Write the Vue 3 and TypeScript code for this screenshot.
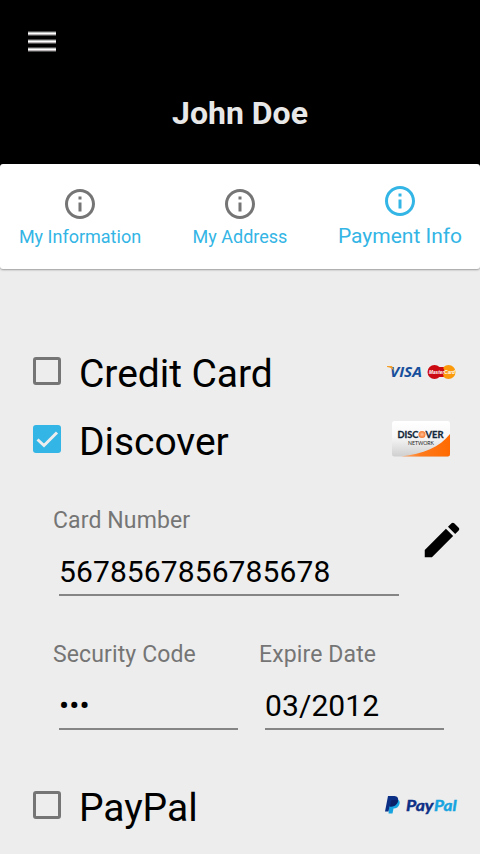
<script setup lang="ts">
import { ref } from 'vue'

interface Tab {
  id: string
  label: string
}

const tabs: Tab[] = [
  { id: 'info', label: 'My Information' },
  { id: 'address', label: 'My Address' },
  { id: 'payment', label: 'Payment Info' },
]

const activeTab = ref('payment')
const method = ref('discover')
const cardNumber = ref('5678567856785678')
const securityCode = ref('•••')
const expireDate = ref('03/2012')
</script>

<template>
  <div class="screen">
    <header class="header">
      <button class="menu" aria-label="Menu">
        <span class="bar"></span>
        <span class="bar"></span>
        <span class="bar"></span>
      </button>
      <h1 class="name">John Doe</h1>
    </header>

    <nav class="tabs">
      <button
        v-for="tab in tabs"
        :key="tab.id"
        class="tab"
        :class="{ active: tab.id === activeTab }"
        @click="activeTab = tab.id"
      >
        <svg class="tab-icon" viewBox="0 0 24 24">
          <path
            d="M11 17h2v-6h-2v6zm1-15C6.48 2 2 6.48 2 12s4.48 10 10 10 10-4.480 10-10S17.520 2 12 2zm0 18c-4.410 0-8-3.590-8-8s3.590-8 8-8 8 3.590 8 8-3.590 8-8 8zM11 9h2V7h-2v2z"
          />
        </svg>
        <span class="tab-label">{{ tab.label }}</span>
      </button>
    </nav>

    <main class="content">
      <div class="method" @click="method = 'credit'">
        <span class="box" :class="{ checked: method === 'credit' }">
          <svg v-if="method === 'credit'" class="tick" viewBox="0 0 28 28"><path d="M4.500 14.500L11 20.500L24 7.500" /></svg>
        </span>
        <span class="method-label">Credit Card</span>
        <svg class="logo" width="72" height="26" viewBox="0 -4 72 26">
          <text class="visa" x="4" y="15" textLength="32" lengthAdjust="spacingAndGlyphs">VISA</text>
          <path d="M1 4H6L8.500 9.500C7 7 4.500 5.500 1 5Z" fill="#f5a02c" />
          <circle cx="48.500" cy="10" r="7" fill="#cc0a12" />
          <circle cx="62.500" cy="10" r="7" fill="#fb9a0b" />
          <path d="M52 5H58V15H52Z" fill="#cc0a12" />
          <path d="M57 6H62M57 14H62M57 12.500H60" stroke="#fb9a0b" stroke-width="1" />
          <text class="master" x="43" y="12" textLength="26" lengthAdjust="spacingAndGlyphs">MasterCard</text>
        </svg>
      </div>

      <div class="method" @click="method = 'discover'">
        <span class="box" :class="{ checked: method === 'discover' }">
          <svg v-if="method === 'discover'" class="tick" viewBox="0 0 28 28"><path d="M4.500 14.500L11 20.500L24 7.500" /></svg>
        </span>
        <span class="method-label">Discover</span>
        <svg class="logo discover-logo" width="60" height="38" viewBox="0 0 60 38">
          <defs>
            <linearGradient id="cardFill" x1="0" y1="0" x2="0" y2="1">
              <stop offset="0" stop-color="#ffffff" />
              <stop offset=".45" stop-color="#f7f7f7" />
              <stop offset="1" stop-color="#cfcfcf" />
            </linearGradient>
            <linearGradient id="swoosh" x1="0" y1="0" x2="1" y2="0">
              <stop offset="0" stop-color="#ffb27a" />
              <stop offset=".4" stop-color="#ff7a1c" />
              <stop offset="1" stop-color="#ff6a00" />
            </linearGradient>
            <radialGradient id="orb">
              <stop offset="0" stop-color="#ffc29a" />
              <stop offset="1" stop-color="#f5782d" />
            </radialGradient>
          </defs>
          <rect x="1" y="1" width="58" height="35.500" rx="2.500" fill="url(#cardFill)" />
          <path d="M59 14V34Q59 36.500 56.500 36.500H10C32 34 49 27 59 14Z" fill="url(#swoosh)" />
          <text class="disc" x="6.500" y="17.700" textLength="21" lengthAdjust="spacingAndGlyphs">DISC</text>
          <text class="disc" x="34.500" y="17.700" textLength="18" lengthAdjust="spacingAndGlyphs">VER</text>
          <circle cx="31" cy="14.500" r="3.500" fill="url(#orb)" />
          <text class="network" x="17" y="25" textLength="26" lengthAdjust="spacingAndGlyphs">NETWORK</text>
        </svg>
      </div>

      <section class="details">
        <div class="line number-line">
          <label class="field number">
            <span class="field-label">Card Number</span>
            <span class="field-value">{{ cardNumber }}</span>
          </label>
          <button class="edit" aria-label="Edit card">
            <svg class="pencil" viewBox="0 0 24 24">
              <path
                d="M3 17.250V21h3.750L17.810 9.940l-3.750-3.750L3 17.250zM20.710 7.040c.390-.390.390-1.020 0-1.410l-2.340-2.340c-.390-.390-1.020-.390-1.410 0l-1.830 1.830 3.750 3.750 1.830-1.830z"
              />
            </svg>
          </button>
        </div>
        <div class="line">
          <label class="field">
            <span class="field-label">Security Code</span>
            <span class="field-value">{{ securityCode }}</span>
          </label>
          <label class="field">
            <span class="field-label">Expire Date</span>
            <span class="field-value">{{ expireDate }}</span>
          </label>
        </div>
      </section>

      <div class="method" @click="method = 'paypal'">
        <span class="box" :class="{ checked: method === 'paypal' }">
          <svg v-if="method === 'paypal'" class="tick" viewBox="0 0 28 28"><path d="M4.500 14.500L11 20.500L24 7.500" /></svg>
        </span>
        <span class="method-label">PayPal</span>
        <svg class="logo" width="74" height="22" viewBox="0 0 74 22">
          <path d="M6 5H12.500Q16.500 6 15.500 10Q14 14.500 9.500 14.500L8.500 19.500H4.500Z" fill="#16a3e0" />
          <path d="M4 2H10.500Q15 2.500 14 7Q12.500 12.500 7 12.500H5.500L4.500 17.500H1Z" fill="#0c2f86" />
          <path d="M7 6.500Q11 5 14.200 6.500Q13 12 7.500 12.500H6Z" fill="#0b1f66" />
          <text class="pay" x="22" y="16.500" textLength="27.500" lengthAdjust="spacingAndGlyphs">Pay</text>
          <text class="pal" x="50" y="16.500" textLength="22.500" lengthAdjust="spacingAndGlyphs">Pal</text>
        </svg>
      </div>
    </main>
  </div>
</template>

<style>
body {
  margin: 0;
  overflow: hidden;
}
</style>

<style scoped>
.screen {
  width: 480px;
  height: 854px;
  overflow: hidden;
  background: linear-gradient(#000 0 180px, #ededed 180px);
  font-family: Roboto, sans-serif;
  color: #000;
}

button {
  border: 0;
  padding: 0;
  background: none;
  font-family: inherit;
}

.header {
  box-sizing: border-box;
  height: 164px;
  padding: 31px 28px 0;
}

.menu {
  display: flex;
  flex-direction: column;
  gap: 3px;
  width: 28px;
}

.bar {
  height: 5px;
  background: linear-gradient(#4c4c4c 0 1px, #b9bbbb 1px 2px, #fff 2px 3px, #b9b5b6 3px 4px, #4c4c4c 4px);
}

.name {
  margin: 42px 0 0;
  text-align: center;
  font-size: 32px;
  line-height: 38px;
  font-weight: 700;
  color: #e8e8e8;
}

.tabs {
  display: grid;
  grid-template-columns: repeat(3, 160px);
  height: 105px;
  background: #fff;
  border-radius: 3px;
  box-shadow: 0 1px 2px rgba(0, 0, 0, 0.35);
}

.tab {
  display: flex;
  flex-direction: column;
  align-items: center;
  padding-top: 22px;
  color: #33b5e5;
}

.tab-icon {
  width: 36px;
  height: 36px;
  fill: #757575;
}

.tab-label {
  margin-top: 4px;
  font-size: 18px;
  line-height: 22px;
  white-space: nowrap;
}

.tab.active {
  padding-top: 19px;
}

.active .tab-icon {
  fill: #33b5e5;
}

.active .tab-label {
  font-size: 21px;
  line-height: 26px;
}

.content {
  padding-top: 70px;
}

.method {
  display: flex;
  align-items: center;
  height: 68px;
  padding: 0 22px 0 33px;
}

.box {
  box-sizing: border-box;
  width: 28px;
  height: 28px;
  margin: -4px 18px 0 0;
  border: 3px solid #757575;
  border-radius: 3px;
}

.box.checked {
  border: 0;
  background: #33b5e5;
}

.tick {
  display: block;
  width: 28px;
  height: 28px;
  fill: none;
  stroke: #ededed;
  stroke-width: 3;
}

.method-label {
  flex: 1;
  padding-top: 2px;
  font-size: 39px;
  line-height: 48px;
  letter-spacing: -0.05px;
}

.logo {
  display: block;
  margin-top: -4px;
  overflow: visible;
}

.discover-logo {
  margin-right: 7px;
}

.visa {
  font: italic 700 15px 'Open Sans', sans-serif;
  fill: #164f9c;
}

.master {
  font: italic 700 5.5px 'Liberation Sans', sans-serif;
  fill: #fff;
}

.disc {
  font: 700 9px Lato, sans-serif;
  fill: #12283a;
  stroke: #12283a;
  stroke-width: 0.3px;
}

.network {
  font: 400 5.5px Lato, sans-serif;
  fill: #222;
}

.pay,
.pal {
  font: italic 700 14.5px Lato, sans-serif;
  fill: #0c2f86;
  stroke: #0c2f86;
  stroke-width: 0.4px;
}

.pal {
  fill: #16a3e0;
  stroke: #16a3e0;
}

.details {
  display: flex;
  flex-direction: column;
  gap: 45px;
  height: 298px;
  box-sizing: border-box;
  padding: 32px 14px 0 53px;
}

.line {
  display: flex;
  gap: 21px;
  height: 89px;
}

.field {
  display: flex;
  flex-direction: column;
  width: 185px;
}

.field.number {
  width: 346px;
}

.field-label {
  font-size: 23px;
  line-height: 28px;
  letter-spacing: 0.12px;
  color: #757575;
}

.field-value {
  height: 36px;
  margin: 19px 0 0 6px;
  padding-bottom: 4px;
  font-size: 30px;
  line-height: 36px;
  letter-spacing: 0.1px;
  border-bottom: 2px solid #858585;
}

.edit {
  width: 46px;
  height: 46px;
  margin: 10px 0 0 -1px;
}

.pencil {
  display: block;
  width: 46px;
  height: 46px;
}
</style>
